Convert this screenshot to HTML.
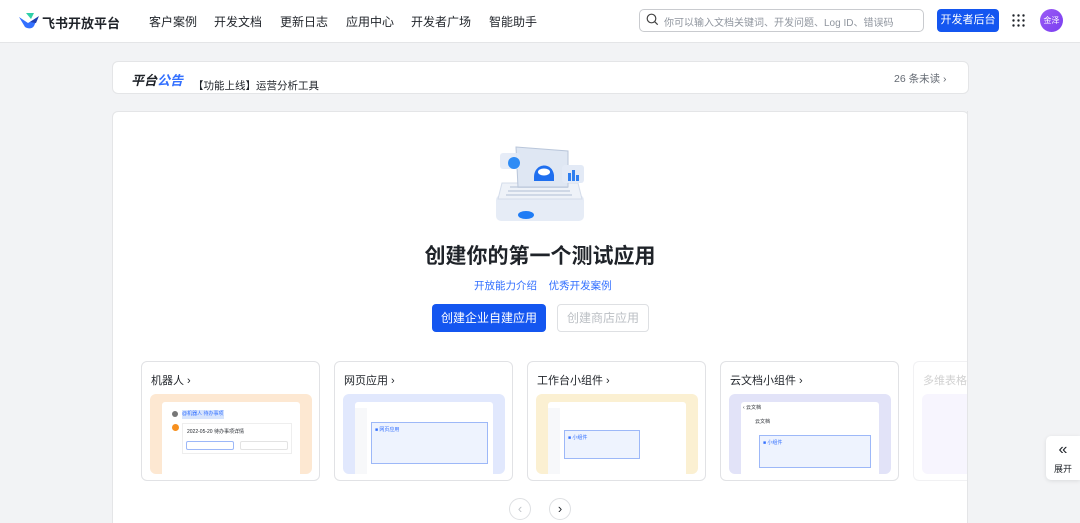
<!DOCTYPE html><html><head><meta charset="utf-8"><style>
*{box-sizing:border-box;margin:0;padding:0}
html,body{width:1080px;height:523px;overflow:hidden}
body{background:#f2f3f5;font-family:"Liberation Sans","Noto Sans CJK SC",sans-serif;color:#1f2329;position:relative}
.hd{position:absolute;left:0;top:0;width:1080px;height:43px;background:#fff;border-bottom:1px solid #e4e5e7}
.a{position:absolute}
.nav{position:absolute;top:13px;font-size:12px;color:#1f2329}
.card{position:absolute;background:#fff;border:1px solid #e4e5e7;border-radius:6px}
.app{position:absolute;top:361px;width:179px;height:120px;background:#fff;border:1px solid #e1e2e5;border-radius:6px}
.app .t{position:absolute;left:9px;top:10px;font-size:11px}
.app .p{position:absolute;left:8px;top:32px;width:162px;height:80px;border-radius:6px;overflow:hidden}
.win{position:absolute;left:12px;top:8px;right:12px;bottom:0;background:#fff;border-radius:3px 3px 0 0}
</style></head><body>
<div class="hd">
 <svg class="a" style="left:18px;top:12px" width="22" height="17" viewBox="0 0 22 17"><path d="M8 1h8l-3 6z" fill="#2fd0a8"/><path d="M1 5l9 6 10-6-4 9c-2 3-6 3-9 1z" fill="#3370ff"/><path d="M12 10l9-6-3 7z" fill="#1f3fb0"/></svg>
 <div class="a" style="left:42px;top:13px;font-size:13px;font-weight:bold">飞书开放平台</div>
 <div class="nav" style="left:149px">客户案例</div><div class="nav" style="left:214px">开发文档</div><div class="nav" style="left:280px">更新日志</div><div class="nav" style="left:346px">应用中心</div><div class="nav" style="left:411px">开发者广场</div><div class="nav" style="left:489px">智能助手</div>
 <div class="a" style="left:639px;top:9px;width:285px;height:23px;border:1px solid #c9cbcf;border-radius:5px"></div>
 <svg class="a" style="left:646px;top:13px" width="13" height="13" viewBox="0 0 13 13"><circle cx="5.5" cy="5.5" r="4.3" fill="none" stroke="#444" stroke-width="1.2"/><path d="M8.7 8.7l3 3" stroke="#444" stroke-width="1.2"/></svg>
 <div class="a" style="left:664px;top:14px;font-size:10px;color:#8f959e">你可以输入文档关键词、开发问题、Log ID、错误码</div>
 <div class="a" style="left:937px;top:9px;width:62px;height:23px;background:#1456f0;border-radius:4px;color:#fff;font-size:11px;text-align:center;line-height:23px">开发者后台</div>
 <svg class="a" style="left:1012px;top:14px" width="13" height="13"><g fill="#1f2329"><circle cx="1.5" cy="1.5" r="1.2"/><circle cx="6.5" cy="1.5" r="1.2"/><circle cx="11.5" cy="1.5" r="1.2"/><circle cx="1.5" cy="6.5" r="1.2"/><circle cx="6.5" cy="6.5" r="1.2"/><circle cx="11.5" cy="6.5" r="1.2"/><circle cx="1.5" cy="11.5" r="1.2"/><circle cx="6.5" cy="11.5" r="1.2"/><circle cx="11.5" cy="11.5" r="1.2"/></g></svg>
 <div class="a" style="left:1040px;top:9px;width:23px;height:23px;border-radius:50%;background:linear-gradient(135deg,#9b5bf5,#7a3ef0);color:#fff;font-size:8px;text-align:center;line-height:23px">金泽</div>
</div>
<div class="card" style="left:112px;top:61px;width:857px;height:33px">
 <div class="a" style="left:18px;top:8px;font-size:13px;font-weight:bold;font-style:italic">平台<span style="color:#3370ff">公告</span></div>
 <div class="a" style="left:80px;top:16px;font-size:10.5px">【功能上线】运营分析工具</div>
 <div class="a" style="left:781px;top:9px;font-size:10.5px;color:#646a73">26 条未读 ›</div>
</div>
<div class="card" style="left:112px;top:111px;width:857px;height:430px"></div>
<svg class="a" style="left:492px;top:143px" width="96" height="88" viewBox="0 0 96 88">
 <rect x="4" y="52" width="88" height="26" rx="5" fill="#e6ecf6"/>
 <path d="M10 40h76l4 16H6z" fill="#eef2f8" stroke="#d4dcea"/>
 <g fill="#cfd8e6"><rect x="18" y="43" width="58" height="2"/><rect x="16" y="47" width="62" height="2"/><rect x="14" y="51" width="66" height="2"/></g>
 <path d="M24 4l52 4v36H26z" fill="#dfe7f3" stroke="#b9c6da"/>
 <path d="M42 34c0-14 18-16 20-2v6H42z" fill="#1f6fef"/>
 <ellipse cx="52" cy="29" rx="6" ry="3.5" fill="#fff"/>
 <rect x="8" y="10" width="20" height="16" rx="3" fill="#e3eaf6" opacity=".9"/><circle cx="22" cy="20" r="6" fill="#2f8cf5"/>
 <rect x="70" y="22" width="22" height="18" rx="3" fill="#e3eaf6"/><g fill="#2f7ff0"><rect x="76" y="30" width="3" height="8"/><rect x="80" y="27" width="3" height="11"/><rect x="84" y="32" width="3" height="6"/></g>
 <ellipse cx="34" cy="72" rx="8" ry="4" fill="#1f7cf5"/>
</svg>
<div class="a" style="left:0;width:1080px;top:240px;text-align:center;font-size:21px;font-weight:bold;color:#1f2329">创建你的第一个测试应用</div>
<div class="a" style="left:474px;top:278px;font-size:10.5px;color:#3370ff">开放能力介绍&nbsp;&nbsp;&nbsp;&nbsp;优秀开发案例</div>
<div class="a" style="left:432px;top:304px;width:114px;height:28px;background:#1456f0;border-radius:4px;color:#fff;font-size:12px;text-align:center;line-height:28px">创建企业自建应用</div>
<div class="a" style="left:557px;top:304px;width:92px;height:28px;border:1px solid #dee0e3;border-radius:4px;color:#bbbfc4;font-size:12px;text-align:center;line-height:26px">创建商店应用</div>
<div class="app" style="left:141px"><div class="t">机器人 ›</div><div class="p" style="background:#fde8d2"><div class="win" style="left:12px;right:12px">
 <div class="a" style="left:10px;top:9px;width:6px;height:6px;border-radius:50%;background:#777"></div><div class="a" style="left:20px;top:8px;width:42px;height:9px;background:#d6e4fd;font-size:5px;line-height:9px;color:#3370ff">@机器人 待办事项</div>
 <div class="a" style="left:10px;top:22px;width:7px;height:7px;border-radius:50%;background:#f7901e"></div>
 <div class="a" style="left:20px;top:21px;width:110px;height:31px;border:1px solid #eee;font-size:5px;padding:4px">2022-05-20 待办事项详情</div>
 <div class="a" style="left:24px;top:39px;width:48px;height:9px;border:1px solid #9db8f8;border-radius:2px"></div><div class="a" style="left:78px;top:39px;width:48px;height:9px;border:1px solid #e3e3e3;border-radius:2px"></div>
</div></div></div>
<div class="app" style="left:334px"><div class="t">网页应用 ›</div><div class="p" style="background:#e1e8fd"><div class="win"><div class="a" style="left:0;top:6px;width:12px;bottom:0;background:#f7f8fa"></div><div class="a" style="left:16px;top:20px;width:117px;height:42px;border:1px solid #9db8f8;background:#eef3fe;font-size:5px;color:#3370ff;padding:3px">■ 网页应用</div></div></div></div>
<div class="app" style="left:527px"><div class="t">工作台小组件 ›</div><div class="p" style="background:#fbf0d2"><div class="win"><div class="a" style="left:0;top:6px;width:12px;bottom:0;background:#f7f8fa"></div><div class="a" style="left:16px;top:28px;width:76px;height:29px;border:1px solid #9db8f8;background:#eef3fe;font-size:5px;color:#3370ff;padding:3px">■ 小组件</div></div></div></div>
<div class="app" style="left:720px"><div class="t">云文档小组件 ›</div><div class="p" style="background:#e2e3f8"><div class="win"><div class="a" style="left:2px;top:2px;font-size:5px">‹ 云文档</div><div class="a" style="left:14px;top:16px;font-size:5px">云文档</div><div class="a" style="left:18px;top:33px;width:112px;height:33px;border:1px solid #9db8f8;background:#eef3fe;font-size:5px;color:#3370ff;padding:3px">■ 小组件</div></div></div></div>
<div class="app" style="left:913px;width:60px;border-right:none;border-radius:6px 0 0 6px;opacity:.45"><div class="t" style="color:#999;white-space:nowrap">多维表格</div><div class="p" style="background:#eeeafd;width:60px"></div></div>
<div class="a" style="left:967px;top:111px;width:113px;height:412px;background:#f2f3f5;border-left:1px solid #e4e5e7"></div>
<div class="a" style="left:1046px;top:436px;width:34px;height:44px;background:#fff;border-radius:5px 0 0 5px;box-shadow:0 1px 4px rgba(0,0,0,.1);text-align:center;font-size:9px;padding-top:6px"><div style="font-size:16px;line-height:16px">«</div><div style="margin-top:4px">展开</div></div>
<div class="a" style="left:509px;top:498px;width:22px;height:22px;border:1px solid #dee0e3;border-radius:50%;color:#c0c4c9;text-align:center;line-height:20px;font-size:13px">‹</div>
<div class="a" style="left:549px;top:498px;width:22px;height:22px;border:1px solid #dee0e3;border-radius:50%;background:#fff;color:#1f2329;text-align:center;line-height:20px;font-size:13px">›</div>
</body></html>
